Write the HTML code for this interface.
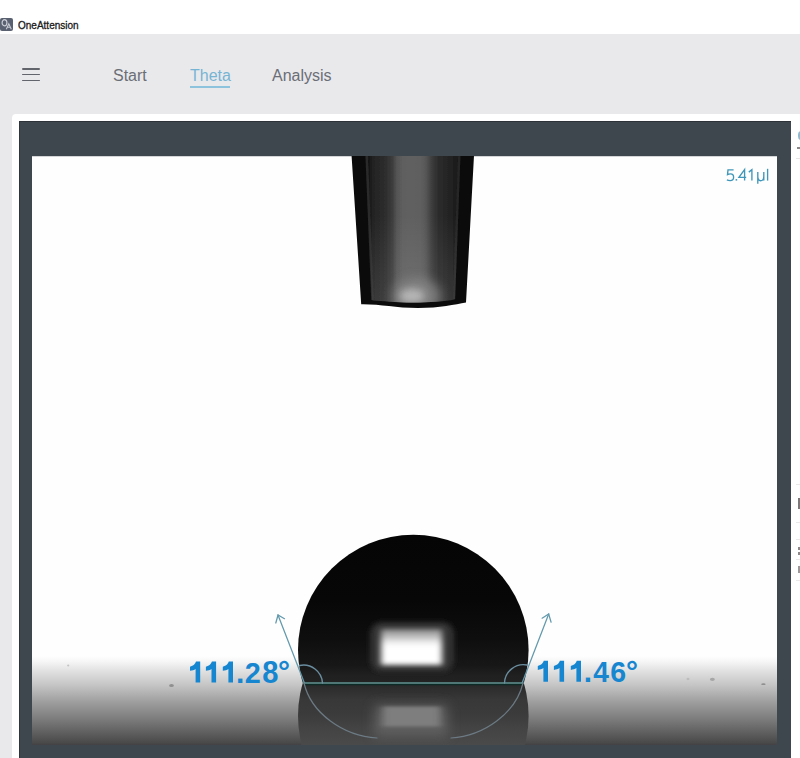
<!DOCTYPE html>
<html><head><meta charset="utf-8">
<style>
html,body{margin:0;padding:0;}
body{width:800px;height:758px;overflow:hidden;position:relative;background:#e9e9ec;font-family:"Liberation Sans",sans-serif;}
.titlebar{position:absolute;left:0;top:0;width:800px;height:34px;background:#fff;}
.appicon{position:absolute;left:0;top:18px;width:13px;height:13px;background:#596070;border-radius:2px;}
.apptitle{position:absolute;left:18px;top:20px;font-size:10px;line-height:12px;color:#1a1a1a;-webkit-text-stroke:0.3px #1a1a1a;}
.nav{position:absolute;font-size:16px;color:#6b6e76;top:66px;line-height:20px;}
.ham{position:absolute;left:22.2px;width:18px;height:1.8px;background:#62656c;border-radius:1px;}
.panel{position:absolute;left:12px;top:114px;width:800px;height:700px;background:#fff;border-radius:4px;}
.frame{position:absolute;left:19px;top:121px;width:771px;height:650px;background:#3d474d;border-top:1px solid #2c3237;border-left:1px solid #2f363b;}
svg{position:absolute;left:0;top:0;}
</style></head>
<body>
<div class="titlebar"></div>
<svg style="position:absolute;left:0;top:17px" width="14" height="15" viewBox="0 0 14 15">
  <rect x="0" y="1" width="13" height="13" rx="2" fill="#596070"/>
  <ellipse cx="4.5" cy="5.8" rx="2.4" ry="3.1" fill="none" stroke="#c9ccd4" stroke-width="1.2"/>
  <path d="M6.3 12.2 L8.8 6.8 L11.3 12.2 M7.3 10.3 L10.3 10.3" fill="none" stroke="#c9ccd4" stroke-width="1.1"/>
</svg>
<div class="apptitle">OneAttension</div>
<div class="ham" style="top:67.75px"></div>
<div class="ham" style="top:73.6px"></div>
<div class="ham" style="top:79.6px"></div>
<div class="nav" style="left:113px">Start</div>
<div class="nav" style="left:190px;color:#77b4d4">Theta</div>
<div style="position:absolute;left:190px;top:86px;width:40px;height:2px;background:#8ec3dd"></div>
<div class="nav" style="left:272px">Analysis</div>
<div class="panel"></div>
<div class="frame"></div>
<div style="position:absolute;left:791px;top:114px;width:9px;height:644px;background:#fff"></div>
<div style="position:absolute;left:797.8px;top:131.2px;width:6px;height:8.6px;background:#8dbcd0;border-radius:50%"></div>
<div style="position:absolute;left:797px;top:147px;width:3px;height:2px;background:#8a8a8a"></div>
<div style="position:absolute;left:796px;top:157.5px;width:4px;height:1px;background:#e6e6e6"></div>
<div style="position:absolute;left:796px;top:484px;width:4px;height:1px;background:#e9e9e9"></div>
<div style="position:absolute;left:798px;top:498px;width:2px;height:11px;background:#7a7a7a"></div>
<div style="position:absolute;left:796px;top:522px;width:4px;height:1px;background:#e9e9e9"></div>
<div style="position:absolute;left:796px;top:539px;width:4px;height:1px;background:#e9e9e9"></div>
<div style="position:absolute;left:798px;top:546.5px;width:2px;height:3px;background:#8a8a8a"></div>
<div style="position:absolute;left:798px;top:552px;width:2px;height:2.5px;background:#8a8a8a"></div>
<div style="position:absolute;left:796px;top:559px;width:4px;height:1px;background:#e9e9e9"></div>
<div style="position:absolute;left:798px;top:566px;width:2px;height:7px;background:#9a9a9a"></div>
<div style="position:absolute;left:796px;top:579.5px;width:4px;height:1px;background:#e9e9e9"></div>
<svg width="800" height="758" viewBox="0 0 800 758">
  <defs>
    <linearGradient id="floor" x1="0" y1="656" x2="0" y2="745" gradientUnits="userSpaceOnUse">
      <stop offset="0" stop-color="#fefefe"/>
      <stop offset="0.067" stop-color="#f5f5f5"/>
      <stop offset="0.157" stop-color="#e3e3e3"/>
      <stop offset="0.326" stop-color="#c5c5c5"/>
      <stop offset="0.517" stop-color="#9e9e9e"/>
      <stop offset="0.719" stop-color="#7a7a7a"/>
      <stop offset="0.888" stop-color="#5a5a5a"/>
      <stop offset="0.978" stop-color="#494949"/>
      <stop offset="1" stop-color="#444046"/>
    </linearGradient>
    <clipPath id="img"><rect x="32" y="156" width="745" height="589"/></clipPath>
    <clipPath id="above"><rect x="0" y="0" width="800" height="683"/></clipPath>
    <clipPath id="reflc"><circle cx="413.3" cy="716" r="115.3"/></clipPath>
    <clipPath id="below"><rect x="0" y="683" width="800" height="75"/></clipPath>
    <clipPath id="needleclip"><path d="M351.2 150 L474.3 150 L466 302.5 C455 304.5 440 308 418 308 C395 308 380 304 361.2 304.3 Z"/></clipPath>
    <clipPath id="needleinner"><path d="M366 150 L461 150 L455 299.5 C445 301.5 430 302.5 413 302.5 C395 302.5 382 301 372 300.5 Z"/></clipPath>
    <linearGradient id="needle" x1="0" y1="0" x2="1" y2="0">
      <stop offset="0" stop-color="#161616"/>
      <stop offset="0.07" stop-color="#242424"/>
      <stop offset="0.2" stop-color="#2e2e2e"/>
      <stop offset="0.27" stop-color="#3e3e3e"/>
      <stop offset="0.32" stop-color="#555"/>
      <stop offset="0.38" stop-color="#5e5e5e"/>
      <stop offset="0.46" stop-color="#616161"/>
      <stop offset="0.58" stop-color="#5e5e5e"/>
      <stop offset="0.63" stop-color="#585858"/>
      <stop offset="0.71" stop-color="#3a3a3a"/>
      <stop offset="0.775" stop-color="#2c2c2c"/>
      <stop offset="0.91" stop-color="#222"/>
      <stop offset="1" stop-color="#191919"/>
    </linearGradient>
    <radialGradient id="needlehl" cx="410" cy="298" r="45" gradientUnits="userSpaceOnUse" gradientTransform="translate(410 298) scale(1 1.6) translate(-410 -298)">
      <stop offset="0" stop-color="#c8c8c8" stop-opacity="0.95"/>
      <stop offset="0.4" stop-color="#888" stop-opacity="0.6"/>
      <stop offset="1" stop-color="#555" stop-opacity="0"/>
    </radialGradient>
    <linearGradient id="dropg" x1="0" y1="535" x2="0" y2="683" gradientUnits="userSpaceOnUse">
      <stop offset="0" stop-color="#050505"/>
      <stop offset="0.44" stop-color="#070707"/>
      <stop offset="0.7" stop-color="#0e0e0e"/>
      <stop offset="0.88" stop-color="#171717"/>
      <stop offset="0.95" stop-color="#202020"/>
      <stop offset="1" stop-color="#222"/>
    </linearGradient>
    <linearGradient id="reflg" x1="0" y1="683" x2="0" y2="745" gradientUnits="userSpaceOnUse">
      <stop offset="0" stop-color="#262626"/>
      <stop offset="0.1" stop-color="#2e2e2e"/>
      <stop offset="0.27" stop-color="#383838"/>
      <stop offset="0.5" stop-color="#3b3b3b"/>
      <stop offset="0.75" stop-color="#444"/>
      <stop offset="1" stop-color="#4a4a4a"/>
    </linearGradient>
    <filter id="blur3" x="-50%" y="-50%" width="200%" height="200%"><feGaussianBlur stdDeviation="6"/></filter>
    <linearGradient id="hlg" x1="0" y1="0" x2="0" y2="1">
      <stop offset="0" stop-color="#8a8a8a"/>
      <stop offset="0.2" stop-color="#b8b8b8"/>
      <stop offset="0.38" stop-color="#f0f0f0"/>
      <stop offset="0.5" stop-color="#fff"/>
      <stop offset="1" stop-color="#fff"/>
    </linearGradient>
    <filter id="blurhl" x="-50%" y="-50%" width="200%" height="200%"><feGaussianBlur stdDeviation="3.3 2.5"/></filter>
    <filter id="blurrh" x="-50%" y="-50%" width="200%" height="200%"><feGaussianBlur stdDeviation="3.5 1.8"/></filter>
    <linearGradient id="needlev" x1="0" y1="0" x2="0" y2="1">
      <stop offset="0" stop-color="#fff" stop-opacity="0"/>
      <stop offset="0.7" stop-color="#fff" stop-opacity="0.075"/>
      <stop offset="1" stop-color="#fff" stop-opacity="0.1"/>
    </linearGradient>
    <filter id="blur25" x="-50%" y="-50%" width="200%" height="200%"><feGaussianBlur stdDeviation="2.5"/></filter>
    <filter id="blur2" x="-50%" y="-50%" width="200%" height="200%"><feGaussianBlur stdDeviation="3.5"/></filter>
    <filter id="blur1" x="-50%" y="-50%" width="200%" height="200%"><feGaussianBlur stdDeviation="1.5"/></filter>
    <filter id="blur05" x="-10%" y="-10%" width="120%" height="120%"><feGaussianBlur stdDeviation="0.6"/></filter>
  </defs>
  <g clip-path="url(#img)">
    <rect x="32" y="156" width="745" height="589" fill="#fefefe"/>
    <rect x="32" y="155" width="745" height="1.2" fill="#2a3035"/>
    <rect x="32" y="656" width="745" height="89" fill="url(#floor)"/>
    <g filter="url(#blur05)">
      <ellipse cx="68.2" cy="665.5" rx="1.1" ry="0.9" fill="#c4c4c4"/>
      <ellipse cx="171.5" cy="685.5" rx="2.4" ry="1.6" fill="#909090"/>
      <ellipse cx="688" cy="679" rx="1.5" ry="1.2" fill="#bdbdbd"/>
      <ellipse cx="712.4" cy="679.3" rx="2.5" ry="1.6" fill="#a6a6a6"/>
      <ellipse cx="763.4" cy="684.2" rx="2.2" ry="0.9" fill="#909090"/>
    </g>
    <!-- needle -->
    <g clip-path="url(#needleclip)">
      <rect x="340" y="150" width="140" height="170" fill="#0b0b0b"/>
      <path d="M368 150 L459 150 L454 299.5 C445 301.5 430 302.5 413 302.5 C395 302.5 382 301 373 300.5 Z" fill="url(#needle)" filter="url(#blur05)"/>
      <line x1="366.5" y1="150" x2="372.5" y2="300" stroke="#2a2a2a" stroke-width="2.6" filter="url(#blur05)"/>
      <line x1="459.5" y1="150" x2="454" y2="299" stroke="#262626" stroke-width="2.4" filter="url(#blur05)"/>
      
      <g clip-path="url(#needleinner)">
        <rect x="360" y="215" width="110" height="95" fill="url(#needlev)"/>
        <ellipse cx="417" cy="296" rx="24" ry="17" fill="#8a8a8a" filter="url(#blur3)" opacity="0.8"/>
        <ellipse cx="412" cy="296" rx="12" ry="7" fill="#b8b8b8" filter="url(#blur2)" opacity="0.95"/>
      </g>
    </g>
    <!-- reflection -->
    <g clip-path="url(#below)">
      <circle cx="413.3" cy="716" r="115.3" fill="url(#reflg)"/>
      
      <rect x="374" y="705" width="74" height="32" fill="#6a6a6a" filter="url(#blur3)" opacity="0.7"/>
      <rect x="383" y="706.5" width="57" height="20" fill="#7e7e7e" filter="url(#blurrh)"/>
    </g>
    <!-- droplet -->
    <g clip-path="url(#above)">
      <circle cx="413.3" cy="650" r="115.3" fill="url(#dropg)"/>
      <rect x="370" y="622" width="84" height="50" rx="12" fill="#333" filter="url(#blur25)"/>
      <rect x="381" y="629" width="61" height="36" fill="url(#hlg)" filter="url(#blurhl)"/>
    </g>
  </g>
  <!-- angle overlay -->
  <g fill="none" stroke="#6399ac" stroke-width="1.25" stroke-linecap="round">
    <line x1="304" y1="684.6" x2="523" y2="684.6" stroke="#0c2a26" stroke-width="1.2"/>
    <line x1="304" y1="683" x2="523" y2="683" stroke="#4f7574" stroke-width="1.9"/>
    <line x1="304.4" y1="683" x2="278" y2="615"/>
    <path d="M275.8 623 L278 615 L284.5 618.7"/>
    <line x1="522.1" y1="683" x2="548.7" y2="614"/>
    <path d="M542.1 618.2 L548.7 614 L551.1 622.2"/>
    <path d="M299.5 665.5 A19 19 0 0 1 322.5 683" stroke="#6a8ea0" stroke-width="1.4"/>
    <path d="M504.5 683 A19 19 0 0 1 527 665" stroke="#6a8ea0" stroke-width="1.4"/>
    <path d="M304 683 C311 713 343 736 377 738" stroke="#6c7a84" stroke-width="1.2"/>
    <path d="M523 683 C516 713 484 736 451 738" stroke="#6c7a84" stroke-width="1.2"/>
  </g>
  <defs><path id="one" d="M6.0 0 L10.2 0 L10.2 21 L5.6 21 L5.6 7.3 C4.2 8.2 2.2 8.9 0 9.2 L0 5.2 C1.6 4.8 3.1 4.0 4.2 3.0 C5.1 2.1 5.7 1.1 6.0 0 Z"/></defs>
  <g fill="#1686d0">
    <use href="#one" x="190" y="661.6"/>
    <use href="#one" x="205.9" y="661.6"/>
    <use href="#one" x="222.8" y="661.6"/>
    <use href="#one" x="537.8" y="660.8"/>
    <use href="#one" x="553.9" y="660.8"/>
    <use href="#one" x="570.8" y="660.8"/>
  </g>
  <g style="font-family:'Liberation Sans',sans-serif;font-weight:bold;font-size:30px" fill="#1686d0">
    <text transform="translate(236.1 682.6)">.</text>
    <text transform="translate(244.84 682.6) scale(0.96 1.01)">2</text>
    <text transform="translate(262.13 682.6) scale(0.97 1.03)">8</text>
    <text transform="translate(278.1 682.1)">°</text>
    <text transform="translate(583.7 681.8)">.</text>
    <text transform="translate(593.33 681.8) scale(0.94 1.01)">4</text>
    <text transform="translate(610.35 681.8) scale(0.95 1.01)">6</text>
    <text transform="translate(626.0 681.5)">°</text>
  </g>
  <g fill="none" stroke="#3f96b9" stroke-width="1.35" stroke-linecap="butt">
    <path d="M733.6 169.9 L728 169.9 L727.5 174.6 C728.4 174.1 729.6 173.9 730.6 173.9 C732.6 173.9 733.6 175.3 733.6 177.2 C733.6 179.5 732.2 180.6 730.2 180.6 C728.8 180.6 727.6 180.3 726.9 179.9"/>
    <path d="M744.6 180.6 L744.6 169.6 L738.9 177.4 L746.2 177.4"/>
    <path d="M751.9 180.6 L751.9 169.6 L748.8 172.1"/>
    <path d="M757.8 172 L757.8 183.7 M757.8 176.6 C757.8 179.6 758.8 180.7 760.6 180.7 C762.8 180.7 763.8 179.2 763.8 176.4 M763.8 172 L763.8 180.6"/>
    <path d="M767.6 168.8 L767.6 180.6"/>
  </g>
  <rect x="735.6" y="179.1" width="1.6" height="1.5" fill="#3f96b9"/>
</svg>
</body></html>
